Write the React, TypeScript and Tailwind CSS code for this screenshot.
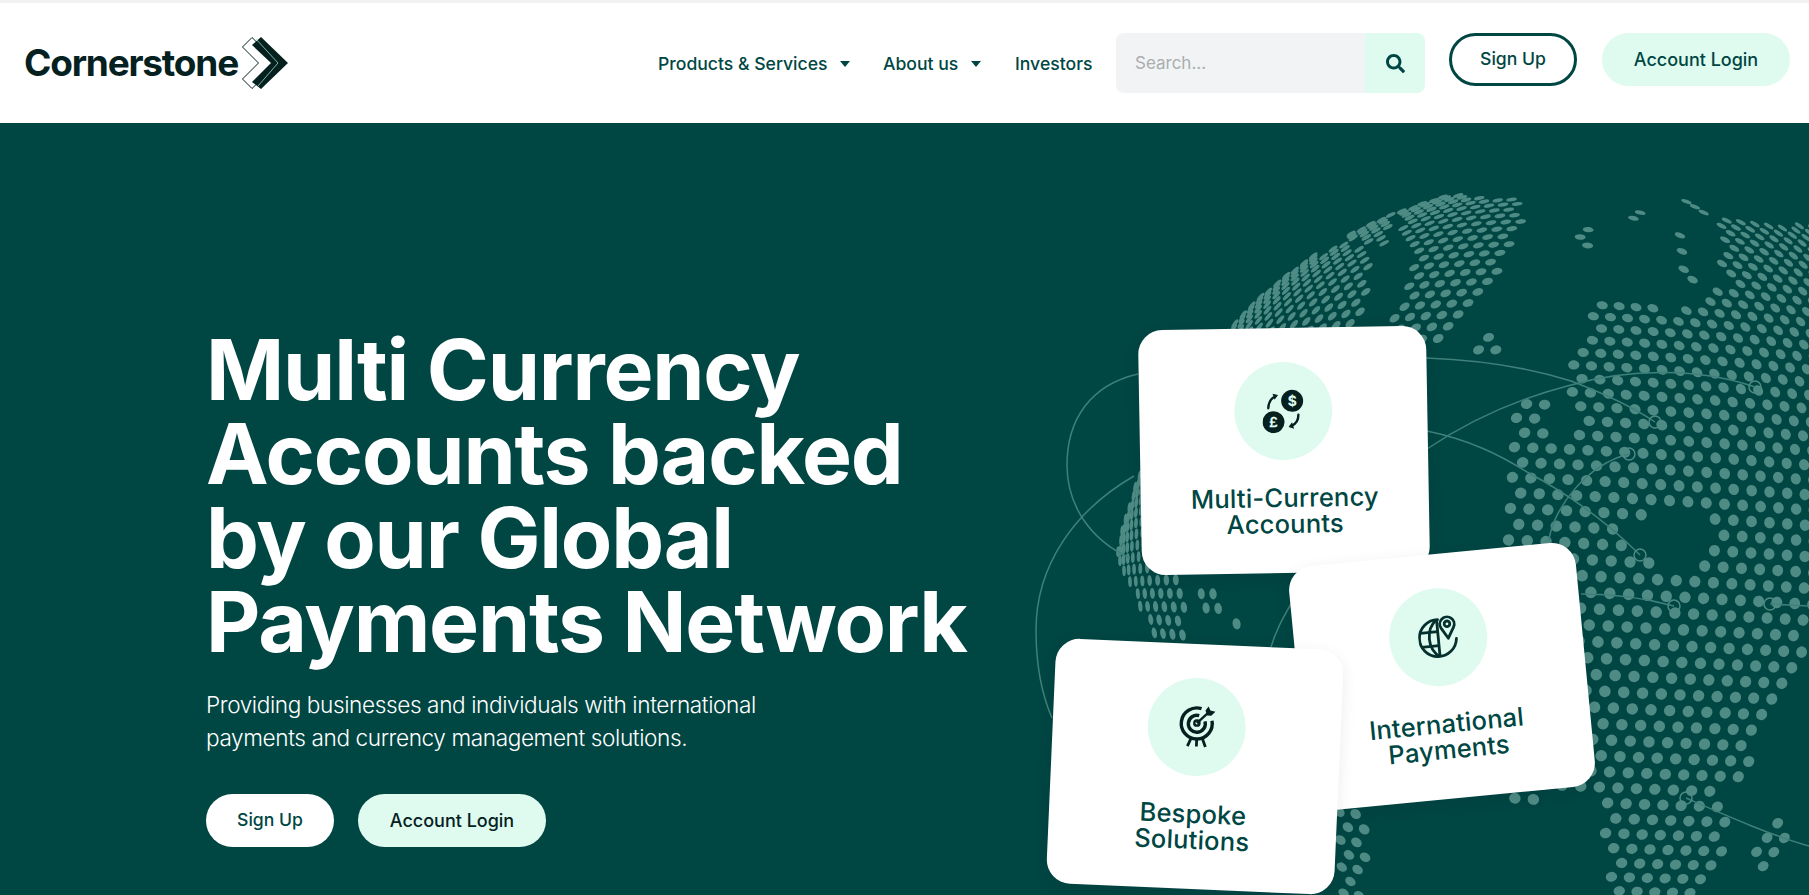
import { FaSearch } from 'react-icons/fa';

type Pt = [number, number];

// land outlines, in page pixels
const land: Pt[][] = [
  [[1588,318],[1600,305],[1615,295],[1628,297],[1637,305],[1653,308],[1670,313],[1687,300],[1707,307],[1717,290],[1733,280],[1713,260],[1723,247],[1720,220],[1753,222],[1787,227],[1830,215],[1830,630],[1809,637],[1793,687],[1777,713],[1760,740],[1743,773],[1725,791],[1735,820],[1722,860],[1695,900],[1610,900],[1600,800],[1500,800],[1500,600],[1508,500],[1510,425],[1525,403],[1570,395],[1567,370],[1580,340]],
  [[1180,300],[1200,280],[1223,257],[1250,233],[1283,218],[1277,240],[1293,253],[1303,240],[1323,223],[1330,233],[1315,263],[1330,247],[1353,243],[1370,253],[1367,290],[1363,340],[1150,340]],
  [[1333,225],[1343,212],[1380,205],[1392,210],[1385,245],[1355,240],[1335,235]],
  [[1397,207],[1413,200],[1453,195],[1500,198],[1512,197],[1527,215],[1515,235],[1505,265],[1490,290],[1480,303],[1460,317],[1447,340],[1385,340],[1400,303],[1410,277],[1420,248],[1407,243]],
  [[1567,233],[1590,223],[1597,243],[1580,252]],
  [[1622,217],[1637,208],[1650,213],[1635,222]],
  [[1680,198],[1700,205],[1715,215],[1695,212]],
  [[1680,235],[1688,238],[1687,257],[1695,280],[1702,287],[1687,287],[1677,257]],
  [[1472,345],[1485,333],[1502,340],[1500,353],[1482,355]],
  [[1125,430],[1145,420],[1148,560],[1180,575],[1190,645],[1160,645],[1135,600],[1120,570],[1112,520],[1120,463]],
  [[1190,577],[1210,590],[1232,610],[1252,622],[1245,628],[1203,613],[1193,587]],
  [[1335,808],[1365,808],[1370,850],[1360,900],[1335,900]],
  [[1785,808],[1792,820],[1775,870],[1757,880],[1752,850],[1770,830]],
];

const holes: Pt[][] = [
  [[1545,405],[1572,402],[1575,430],[1550,445]],
  [[1660,500],[1713,510],[1710,537],[1697,567],[1650,563],[1623,537]],
];

function inside(x: number, y: number, poly: Pt[]) {
  let hit = false;
  for (let i = 0, j = poly.length - 1; i < poly.length; j = i++) {
    const [xi, yi] = poly[i];
    const [xj, yj] = poly[j];
    if (yi > y !== yj > y && x < ((xj - xi) * (y - yi)) / (yj - yi) + xi) hit = !hit;
  }
  return hit;
}

// staggered dots wrapped round a lopsided sphere, so they squash towards the rim
function buildDots() {
  const cx = 1560, cy = 640, Ry = 460, step = 19, rowStep = 16.4, tilt = 0.05;
  const dots: { x: number; y: number; rx: number; ry: number; rot: number }[] = [];
  for (let i = -60; i <= 60; i++) {
    for (let j = -60; j <= 60; j++) {
      const u = (j + (i % 2 === 0 ? 0 : 0.5)) * step;
      const v = i * rowStep;
      const a = u * Math.cos(tilt) - v * Math.sin(tilt);
      const b = u * Math.sin(tilt) + v * Math.cos(tilt);
      const Rx = a < 0 ? 452 : 700;
      const theta = Math.hypot(a / Rx, b / Ry) || 0.001;
      if (theta > 1.5) continue;
      const shrink = Math.sin(theta) / theta;
      const x = cx + a * shrink;
      const y = cy + b * shrink;
      if (!land.some((p) => inside(x, y, p))) continue;
      if (holes.some((p) => inside(x, y, p))) continue;
      const c = Math.cos(theta);
      dots.push({
        x, y,
        rx: 5.8 * Math.max(c, 0.32),
        ry: 5.8 * (0.9 + 0.1 * c),
        rot: (Math.atan2(y - 560, x - cx) * 180) / Math.PI,
      });
    }
  }
  return dots;
}

const dots = buildDots();

const arcs = [
  'M1138 374 C1090 385 1067 420 1067 465 C1067 505 1090 540 1130 558',
  'M1134 476 C1075 510 1036 565 1036 630 C1036 665 1042 695 1052 718',
  'M1426 358 C1480 360 1530 368 1571 381 C1600 392 1630 405 1655 422',
  'M1427 449 C1470 420 1520 398 1571 385 C1630 368 1700 368 1755 387',
  'M1427 431 C1470 440 1500 455 1527 472 C1570 495 1610 525 1640 555',
  'M1549 540 C1553 510 1585 465 1629 454',
  'M1581 594 C1610 594 1645 598 1674 606',
  'M1770 604 L1809 606',
  'M1686 798 C1725 815 1770 835 1809 846',
  'M1271 647 C1276 630 1283 618 1291 604',
];

const nodes: Pt[] = [[1655,422],[1755,387],[1640,555],[1629,454],[1674,606],[1770,604],[1686,798]];

function GlobeMap() {
  return (
    <svg className="absolute inset-0 h-full w-full" viewBox="0 123 1809 772" fill="none">
      {dots.map((d, i) => (
        <ellipse key={i} cx={d.x} cy={d.y} rx={d.rx} ry={d.ry} fill="#4f8b85" transform={`rotate(${d.rot} ${d.x} ${d.y})`} />
      ))}
      {arcs.map((d, i) => (
        <path key={i} d={d} stroke="#3f807a" strokeWidth="1.5" />
      ))}
      {nodes.map(([x, y], i) => (
        <circle key={i} cx={x} cy={y} r="6" stroke="#4f8b85" strokeWidth="1.5" />
      ))}
    </svg>
  );
}

function LogoMark() {
  return (
    <svg width="46" height="52" viewBox="0 0 46 52" className="ml-[4px]">
      <path d="M10 .5.5 10 16.5 26 .5 42 10 51.5 36 26Z" fill="#fff" stroke="#05211f" strokeWidth="1" />
      <path d="M19 0 46 26 19 52 10 45 29 26 10 8Z" fill="#05211f" />
      <path d="M14 2 36 26 16 49" stroke="#9fd8c8" strokeWidth=".8" fill="none" />
    </svg>
  );
}

function Caret() {
  return <span className="h-0 w-0 border-x-[5.5px] border-t-[6px] border-x-transparent border-t-[#004643]" />;
}

function CoinsIcon() {
  return (
    <svg width="42" height="44" viewBox="0 0 42 44" fill="none">
      <circle cx="30" cy="12" r="11" fill="#05211f" />
      <circle cx="11" cy="33" r="11" fill="#05211f" />
      <text x="30" y="17" textAnchor="middle" fontSize="14" fontWeight="700" fill="#dffbf0" fontFamily="Inter, sans-serif">$</text>
      <text x="11" y="38" textAnchor="middle" fontSize="14" fontWeight="700" fill="#dffbf0" fontFamily="Inter, sans-serif">£</text>
      <path d="M6 19C6.500 13 9 9 13 7.500" stroke="#05211f" strokeWidth="2.400" strokeLinecap="round" />
      <path d="M10.500 4.500 16 6 12.500 10.500Z" fill="#05211f" />
      <path d="M36 26C36 31 33.500 35 29 37" stroke="#05211f" strokeWidth="2.400" strokeLinecap="round" />
      <path d="M31.500 40 26 38 29.500 33.500Z" fill="#05211f" />
    </svg>
  );
}

function GlobePinIcon() {
  return (
    <svg width="40" height="42" viewBox="0 0 40 42" fill="none" stroke="#05302e" strokeWidth="2.800">
      <path d="M21 3.500A18.500 18.500 0 1 0 38 24" strokeLinecap="round" />
      <path d="M20 3.500V40.500" />
      <path d="M20 3.500C8 12 8 32 20 40.500" />
      <path d="M2.500 15.500H20M2.500 29.500H20" />
      <path d="M30 23 23.800 12.500A7.200 7.200 0 1 1 36.200 12.500Z" fill="#dffbf0" strokeLinejoin="round" />
      <circle cx="30" cy="8.500" r="2.800" />
    </svg>
  );
}

function TargetIcon() {
  return (
    <svg width="40" height="44" viewBox="0 0 40 44" fill="none" stroke="#05211f" strokeWidth="3.400">
      <path d="M24 3.500A15.500 15.500 0 1 0 35 15" />
      <path d="M22 10.500A8.500 8.500 0 1 0 28 16" />
      <circle cx="20" cy="18" r="2.600" strokeWidth="2.400" />
      <path d="M20 18 31 7" strokeWidth="2.400" />
      <path d="M28 5 31 1 33 5 38 6 34 10 30 10Z" fill="#05211f" stroke="none" />
      <path d="M15 33 11.500 41.500M20.500 35V41.500M26 33 29.500 41.500" strokeWidth="2.800" />
    </svg>
  );
}

function FeatureCard({ className, icon, lines }: { className: string; icon: React.ReactNode; lines: string[] }) {
  return (
    <div className={`absolute flex h-[245px] w-[288px] flex-col items-center rounded-[24px] bg-white pt-[34px] shadow-[0_4px_16px_rgba(0,0,0,0.08)] ${className}`}>
      <div className="flex h-[98px] w-[98px] items-center justify-center rounded-full bg-[#dffbf0]">{icon}</div>
      <div className="mt-[25px] text-center text-[25.5px] leading-[26px] font-medium tracking-[0.2px] text-[#004643]">
        {lines.map((l) => (
          <div key={l}>{l}</div>
        ))}
      </div>
    </div>
  );
}

export default function App() {
  return (
    <div className="flex h-[895px] w-full flex-col overflow-hidden bg-white font-['Inter',sans-serif]">
      <header className="flex h-[123px] shrink-0 items-start justify-between border-t-[3px] border-[#f1f2f3] pr-[19px] pl-[24px]">
        <div className="mt-[34px] flex items-center">
          <span className="text-[37px] leading-[52px] font-bold tracking-[-1.2px] text-[#05211f]">Cornerstone</span>
          <LogoMark />
        </div>
        <div className="flex items-start">
          <nav className="mt-[31px] flex h-[60px] items-center text-[17.6px] font-medium text-[#004643]">
            <a className="w-[170px] whitespace-nowrap">Products &amp; Services</a>
            <span className="mr-[33px] ml-[12px] flex"><Caret /></span>
            <a className="w-[76px] whitespace-nowrap">About us</a>
            <span className="mr-[34px] ml-[12px] flex"><Caret /></span>
            <a className="mr-[24px] w-[77px] whitespace-nowrap">Investors</a>
          </nav>
          <div className="mt-[30px] flex h-[60px] w-[309px]">
            <input
              placeholder="Search..."
              className="h-full w-[249px] rounded-l-lg bg-[#f1f3f4] pl-[19px] text-[17px] outline-none placeholder:text-[#a9aeae]"
            />
            <button className="flex h-full w-[60px] items-center justify-center rounded-r-lg bg-[#dffbf0] text-[#004643]">
              <FaSearch size={19} />
            </button>
          </div>
          <button className="mt-[30px] ml-[24px] h-[53px] w-[128px] rounded-[27px] border-[3px] border-[#004643] text-[17.6px] font-medium text-[#004643]">Sign Up</button>
          <button className="mt-[30px] ml-[25px] h-[53px] w-[188px] rounded-[27px] bg-[#dffbf0] text-[18px] font-medium text-[#004643]">Account Login</button>
        </div>
      </header>

      <main className="relative flex-1 overflow-hidden bg-[#004643]">
        <GlobeMap />
        <FeatureCard className="top-[205px] left-[1140px] -rotate-1" icon={<CoinsIcon />} lines={['Multi-Currency', 'Accounts']} />
        <FeatureCard className="top-[431px] left-[1298px] rotate-[-5.5deg]" icon={<GlobePinIcon />} lines={['International', 'Payments']} />
        <FeatureCard className="top-[521px] left-[1051px] rotate-[2.5deg]" icon={<TargetIcon />} lines={['Bespoke', 'Solutions']} />

        <div className="relative pt-[205px] pl-[206px] text-white">
          <h1 className="text-[84px] leading-[84px] font-bold tracking-[-1.2px]">
            Multi Currency<br />
            Accounts backed<br />
            by our Global<br />
            Payments Network
          </h1>
          <p className="mt-[24px] text-[22.6px] leading-[33px] font-light tracking-[-0.4px]">
            Providing businesses and individuals with international<br />
            payments and currency management solutions.
          </p>
          <div className="mt-[40px] flex gap-[24px]">
            <button className="h-[53px] w-[128px] rounded-[27px] bg-white text-[17.6px] font-medium text-[#004643]">Sign Up</button>
            <button className="h-[53px] w-[188px] rounded-[27px] bg-[#dffbf0] text-[18px] font-medium text-[#05211f]">Account Login</button>
          </div>
        </div>
      </main>
    </div>
  );
}
